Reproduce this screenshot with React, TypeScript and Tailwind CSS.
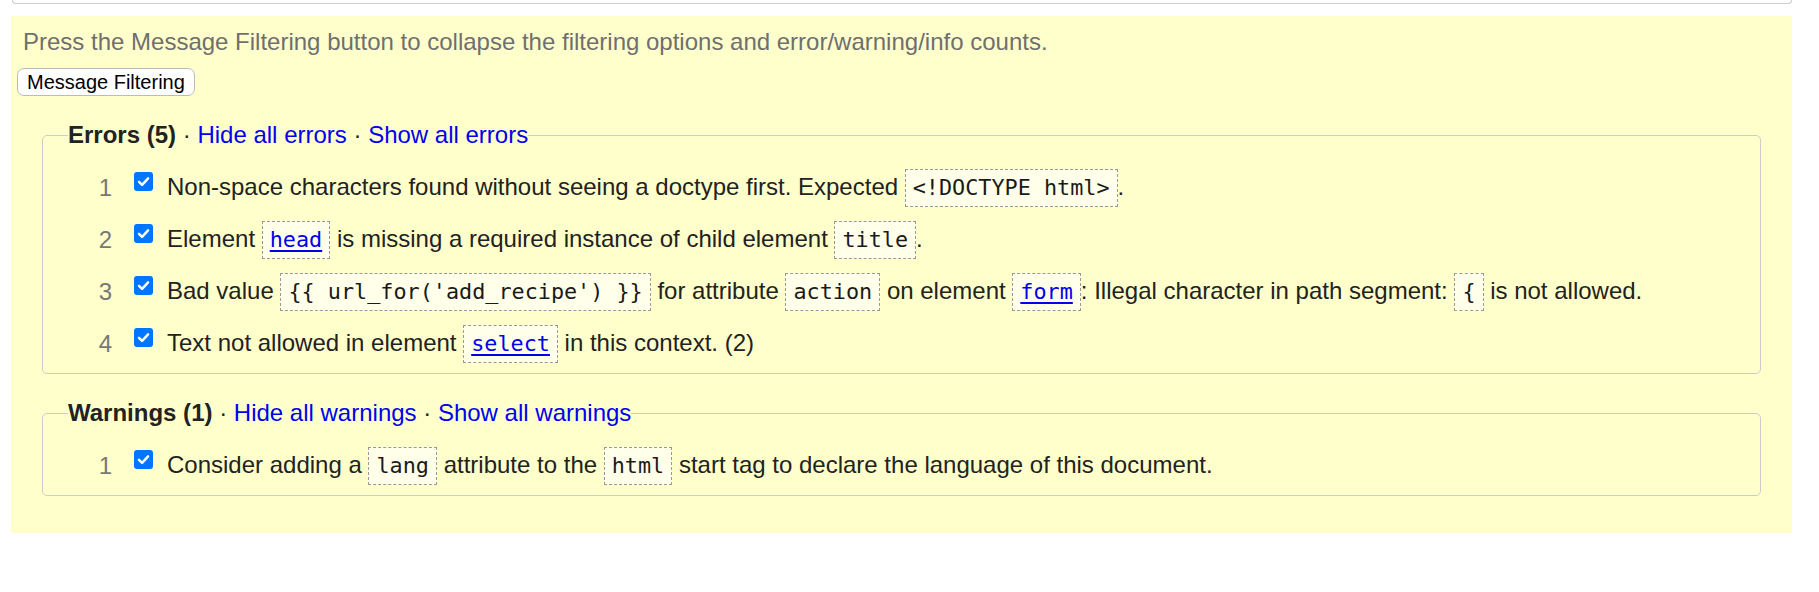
import React from "react";

type Seg = string | { code: string; link?: boolean };

type Msg = { n: number; parts: Seg[] };

const errors: Msg[] = [
  {
    n: 1,
    parts: [
      "Non-space characters found without seeing a doctype first. Expected ",
      { code: "<!DOCTYPE html>" },
      ".",
    ],
  },
  {
    n: 2,
    parts: [
      "Element ",
      { code: "head", link: true },
      " is missing a required instance of child element ",
      { code: "title" },
      ".",
    ],
  },
  {
    n: 3,
    parts: [
      "Bad value ",
      { code: "{{ url_for('add_recipe') }}" },
      " for attribute ",
      { code: "action" },
      " on element ",
      { code: "form", link: true },
      ": Illegal character in path segment: ",
      { code: "{" },
      " is not allowed.",
    ],
  },
  {
    n: 4,
    parts: [
      "Text not allowed in element ",
      { code: "select", link: true },
      " in this context. (2)",
    ],
  },
];

const warnings: Msg[] = [
  {
    n: 1,
    parts: [
      "Consider adding a ",
      { code: "lang" },
      " attribute to the ",
      { code: "html" },
      " start tag to declare the language of this document.",
    ],
  },
];

function Check() {
  return (
    <div className="w-[19px] h-[19px] mt-[10px] self-start shrink-0 rounded-[3px] bg-[#0075ff] flex items-center justify-center">
      <svg width="15" height="15" viewBox="0 0 16 16" fill="none">
        <path
          d="M3.2 8.4 L6.5 11.6 L12.9 4.6"
          stroke="#fff"
          strokeWidth="2.6"
          strokeLinecap="round"
          strokeLinejoin="round"
        />
      </svg>
    </div>
  );
}

function Code({ code, link }: { code: string; link?: boolean }) {
  return (
    <span
      className={`inline-block align-baseline border border-dashed border-[#999] bg-[#ffffea] px-[7px] py-[4px] leading-[28px] text-[21.8px] whitespace-pre font-['DejaVu_Sans_Mono',monospace] ${
        link ? "text-[#0000ee] underline underline-offset-[3px]" : "text-[#1a1a1a]"
      }`}
    >
      {code}
    </span>
  );
}

function Row({ m }: { m: Msg }) {
  return (
    <div className="h-[52px] flex items-center">
      <span className="w-[44px] text-right leading-[28px] text-[#777] shrink-0">{m.n}</span>
      <div className="ml-[22px] self-stretch flex">
        <Check />
      </div>
      <div className="ml-[14px] leading-[28px] text-[#222] whitespace-nowrap">
        {m.parts.map((p, i) =>
          typeof p === "string" ? (
            <span key={i} className="whitespace-pre">
              {p}
            </span>
          ) : (
            <Code key={i} code={p.code} link={p.link} />
          )
        )}
      </div>
    </div>
  );
}

function Group({ title, count, noun, items }: { title: string; count: number; noun: string; items: Msg[] }) {
  return (
    <fieldset className="mx-[31px] mt-[25px] border border-[#ccc] rounded-[5px] pl-[25px] pt-[13px] pb-[3px]">
      <legend className="leading-[28px] text-[#222] whitespace-pre">
        <span className="font-bold">
          {title} ({count})
        </span>
        {" · "}
        <span className="text-[#0000ee] cursor-pointer">Hide all {noun}</span>
        {" · "}
        <span className="text-[#0000ee] cursor-pointer">Show all {noun}</span>
      </legend>
      {items.map((m) => (
        <Row key={m.n} m={m} />
      ))}
    </fieldset>
  );
}

export default function App() {
  return (
    <div className="w-[1819px] h-[592px] bg-white font-['Liberation_Sans',Arial,sans-serif] text-[24px] overflow-hidden">
      <div className="ml-[12px] w-[1780px] h-[4px] border border-t-0 border-[#ccc] rounded-b-[4px]" />
      <div className="mt-[12px] ml-[11px] w-[1781px] bg-[#ffffcc] pt-[12px] pb-[37px]">
        <p className="ml-[12px] leading-[28px] text-[#6f6f6f]">
          Press the Message Filtering button to collapse the filtering options and error/warning/info counts.
        </p>
        <button className="block mt-[12px] ml-[6px] h-[28px] px-[9px] text-[20px] leading-[26px] text-black bg-white border border-[#bbb] rounded-[7px]">
          Message Filtering
        </button>
        <Group title="Errors" count={5} noun="errors" items={errors} />
        <Group title="Warnings" count={1} noun="warnings" items={warnings} />
      </div>
    </div>
  );
}
